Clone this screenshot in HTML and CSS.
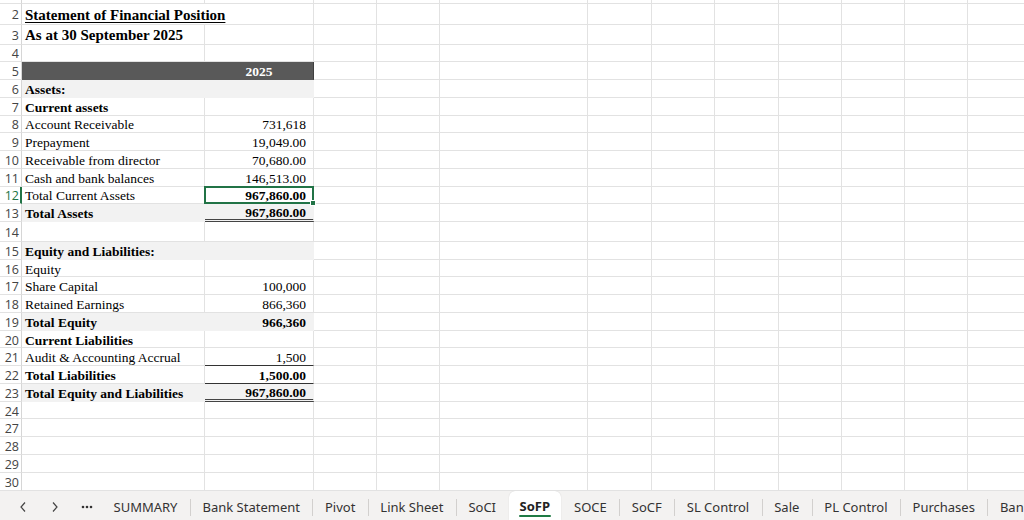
FILE: index.html
```html
<!DOCTYPE html>
<html lang="en">
<head>
<meta charset="utf-8">
<title>SoFP</title>
<link rel="stylesheet" href="styles.css">
</head>
<body>
<div class="sheet">
  <div class="h"></div><div class="a"></div><div class="b"></div><i></i><i></i><i></i><i></i><i></i><i></i><i></i><i></i><i></i><i></i>
  <div class="h">2</div><div class="a span2 title u">Statement of Financial Position</div><i></i><i></i><i></i><i></i><i></i><i></i><i></i><i></i><i></i><i></i>
  <div class="h">3</div><div class="a title">As at 30 September 2025</div><div class="b"></div><i></i><i></i><i></i><i></i><i></i><i></i><i></i><i></i><i></i><i></i>
  <div class="h">4</div><div class="a"></div><div class="b"></div><i></i><i></i><i></i><i></i><i></i><i></i><i></i><i></i><i></i><i></i>
  <div class="h">5</div><div class="a dark"></div><div class="b dark head">2025</div><i></i><i></i><i></i><i></i><i></i><i></i><i></i><i></i><i></i><i></i>
  <div class="h">6</div><div class="a grey bold">Assets:</div><div class="b grey"></div><i></i><i></i><i></i><i></i><i></i><i></i><i></i><i></i><i></i><i></i>
  <div class="h">7</div><div class="a bold">Current assets</div><div class="b"></div><i></i><i></i><i></i><i></i><i></i><i></i><i></i><i></i><i></i><i></i>
  <div class="h">8</div><div class="a">Account Receivable</div><div class="b n">731,618</div><i></i><i></i><i></i><i></i><i></i><i></i><i></i><i></i><i></i><i></i>
  <div class="h">9</div><div class="a">Prepayment</div><div class="b n">19,049.00</div><i></i><i></i><i></i><i></i><i></i><i></i><i></i><i></i><i></i><i></i>
  <div class="h">10</div><div class="a">Receivable from director</div><div class="b n">70,680.00</div><i></i><i></i><i></i><i></i><i></i><i></i><i></i><i></i><i></i><i></i>
  <div class="h">11</div><div class="a">Cash and bank balances</div><div class="b n">146,513.00</div><i></i><i></i><i></i><i></i><i></i><i></i><i></i><i></i><i></i><i></i>
  <div class="h selrow">12</div><div class="a">Total Current Assets</div><div class="b n bold active-cell">967,860.00<span class="handle"></span></div><i></i><i></i><i></i><i></i><i></i><i></i><i></i><i></i><i></i><i></i>
  <div class="h">13</div><div class="a grey bold">Total Assets</div><div class="b grey n bold dbl">967,860.00</div><i></i><i></i><i></i><i></i><i></i><i></i><i></i><i></i><i></i><i></i>
  <div class="h">14</div><div class="a"></div><div class="b"></div><i></i><i></i><i></i><i></i><i></i><i></i><i></i><i></i><i></i><i></i>
  <div class="h">15</div><div class="a grey bold">Equity and Liabilities:</div><div class="b grey"></div><i></i><i></i><i></i><i></i><i></i><i></i><i></i><i></i><i></i><i></i>
  <div class="h">16</div><div class="a">Equity</div><div class="b"></div><i></i><i></i><i></i><i></i><i></i><i></i><i></i><i></i><i></i><i></i>
  <div class="h">17</div><div class="a">Share Capital</div><div class="b n">100,000</div><i></i><i></i><i></i><i></i><i></i><i></i><i></i><i></i><i></i><i></i>
  <div class="h">18</div><div class="a">Retained Earnings</div><div class="b n">866,360</div><i></i><i></i><i></i><i></i><i></i><i></i><i></i><i></i><i></i><i></i>
  <div class="h">19</div><div class="a grey bold">Total Equity</div><div class="b grey n bold">966,360</div><i></i><i></i><i></i><i></i><i></i><i></i><i></i><i></i><i></i><i></i>
  <div class="h">20</div><div class="a bold">Current Liabilities</div><div class="b"></div><i></i><i></i><i></i><i></i><i></i><i></i><i></i><i></i><i></i><i></i>
  <div class="h">21</div><div class="a">Audit &amp; Accounting Accrual</div><div class="b n line">1,500</div><i></i><i></i><i></i><i></i><i></i><i></i><i></i><i></i><i></i><i></i>
  <div class="h">22</div><div class="a bold">Total Liabilities</div><div class="b n bold line">1,500.00</div><i></i><i></i><i></i><i></i><i></i><i></i><i></i><i></i><i></i><i></i>
  <div class="h">23</div><div class="a grey bold">Total Equity and Liabilities</div><div class="b grey n bold dbl">967,860.00</div><i></i><i></i><i></i><i></i><i></i><i></i><i></i><i></i><i></i><i></i>
  <div class="h">24</div><div class="a"></div><div class="b"></div><i></i><i></i><i></i><i></i><i></i><i></i><i></i><i></i><i></i><i></i>
  <div class="h">27</div><div class="a"></div><div class="b"></div><i></i><i></i><i></i><i></i><i></i><i></i><i></i><i></i><i></i><i></i>
  <div class="h">28</div><div class="a"></div><div class="b"></div><i></i><i></i><i></i><i></i><i></i><i></i><i></i><i></i><i></i><i></i>
  <div class="h">29</div><div class="a"></div><div class="b"></div><i></i><i></i><i></i><i></i><i></i><i></i><i></i><i></i><i></i><i></i>
  <div class="h">30</div><div class="a"></div><div class="b"></div><i></i><i></i><i></i><i></i><i></i><i></i><i></i><i></i><i></i><i></i>
</div>
<div class="tabbar">
  <div class="nav">
    <span class="navbtn"><svg width="8" height="12" viewBox="0 0 8 12"><path d="M6 1.5 L2 6 L6 10.5" fill="none" stroke="#444" stroke-width="1.2"/></svg></span>
    <span class="navbtn"><svg width="8" height="12" viewBox="0 0 8 12"><path d="M2 1.5 L6 6 L2 10.5" fill="none" stroke="#444" stroke-width="1.2"/></svg></span>
    <span class="navbtn"><svg width="12" height="4" viewBox="0 0 12 4"><circle cx="2" cy="2" r="1.3" fill="#333"/><circle cx="6" cy="2" r="1.3" fill="#333"/><circle cx="10" cy="2" r="1.3" fill="#333"/></svg></span>
  </div>
  <div class="tabs">
    <span class="tab first">SUMMARY</span>
    <span class="tab">Bank Statement</span>
    <span class="tab">Pivot</span>
    <span class="tab">Link Sheet</span>
    <span class="tab">SoCI</span>
    <span class="tab active">SoFP</span>
    <span class="tab after">SOCE</span>
    <span class="tab">SoCF</span>
    <span class="tab">SL Control</span>
    <span class="tab">Sale</span>
    <span class="tab">PL Control</span>
    <span class="tab">Purchases</span>
    <span class="tab">Ban</span>
  </div>
</div>
</body>
</html>
```
FILE: styles.css
```css
html, body {
  margin: 0;
  padding: 0;
}
body {
  width: 1024px;
  height: 520px;
  overflow: hidden;
  background: #fff;
  display: flex;
  flex-direction: column;
}
.sheet {
  flex: none;
  height: 491px;
  overflow: hidden;
  display: grid;
  grid-template-columns: 22px 183px 109px 63px 63px 148px 64px 63px 64px 63px 63px 63px 63px;
  grid-template-rows: 4.3px 20.3px 20px repeat(10, 17.75px) 19.8px repeat(9, 17.75px) repeat(5, 17.8px);
}
.sheet > * {
  box-sizing: border-box;
  border-right: 1px solid #e2e2e2;
  border-bottom: 1px solid #e2e2e2;
  display: flex;
  align-items: center;
  white-space: nowrap;
  font-family: "Liberation Serif", "Times New Roman", serif;
  font-size: 13.5px;
  color: #000;
  padding: 3px 3px 0 3px;
  min-width: 0;
}
.sheet > .h {
  justify-content: flex-end;
  font-family: "Open Sans", "Noto Sans", sans-serif;
  font-size: 12.5px;
  color: #444;
  border-right-color: #d6d6d6;
  padding: 2px 2px 0 0;
}
.sheet > .h.selrow {
  color: #217346;
  border-right: 2px solid #217346;
  padding-right: 1px;
}
.span2 {
  grid-column: span 2;
}
.sheet > .title {
  font-weight: bold;
  font-size: 15px;
}
.u {
  text-decoration: underline;
  text-underline-offset: 2px;
}
.bold {
  font-weight: bold;
}
.sheet > .n {
  justify-content: flex-end;
  padding-right: 7px;
}
.sheet > .grey {
  background: #f2f2f2;
  border-color: #f2f2f2;
}
.sheet > .dark {
  background: #595959;
  border-color: #595959;
}
.sheet > .b.dark {
  border-right-color: #3f3f3f;
}
.sheet > .head {
  justify-content: center;
  color: #fff;
  font-weight: bold;
}
.sheet > .dbl {
  border-bottom: 3px double #444;
}
.sheet > .line {
  border-bottom: 1px solid #333;
}
.active-cell {
  position: relative;
}
.active-cell::before {
  content: "";
  position: absolute;
  left: -1px;
  top: -1px;
  right: -1px;
  bottom: -1px;
  border: 2px solid #217346;
}
.handle {
  position: absolute;
  right: -3px;
  bottom: -3px;
  width: 4px;
  height: 4px;
  background: #217346;
  border: 1px solid #fff;
}
.tabbar {
  flex: none;
  height: 29px;
  background: #f3f2f1;
  display: flex;
  align-items: stretch;
  font-family: "Noto Sans", "Open Sans", sans-serif;
  font-size: 13px;
  color: #333;
  white-space: nowrap;
  overflow: hidden;
}
.nav {
  display: flex;
  align-items: center;
  padding-left: 7px;
  padding-top: 3px;
}
.navbtn {
  width: 32px;
  display: flex;
  justify-content: center;
  align-items: center;
}
.tabs {
  display: flex;
  align-items: stretch;
  margin-left: -2px;
}
.tab {
  position: relative;
  display: flex;
  align-items: center;
  padding: 3px 12.5px 0;
}
.tab::before {
  content: "";
  position: absolute;
  left: 0;
  top: 8px;
  height: 17px;
  width: 1px;
  background: #d2d0ce;
}
.tab.first::before,
.tab.active::before,
.tab.after::before {
  display: none;
}
.tab.active {
  background: #fff;
  font-weight: bold;
  color: #222;
  padding: 0 11px;
  border-radius: 6px 6px 0 0;
  box-shadow: 0 0 1px rgba(0, 0, 0, 0.2);
}
.tab.active::after {
  content: "";
  position: absolute;
  left: 10px;
  right: 10px;
  bottom: 3px;
  height: 2px;
  border-radius: 1px;
  background: #1f7a45;
}
.tab.after {
  padding-left: 13px;
}
```
